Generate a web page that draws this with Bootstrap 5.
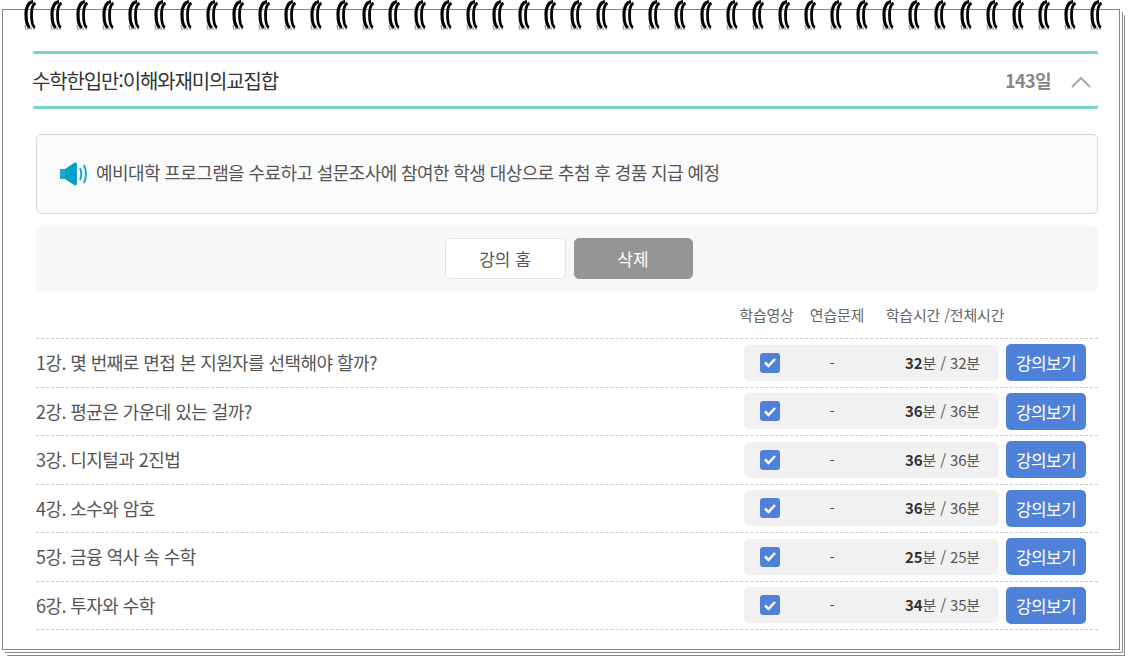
<!DOCTYPE html>
<html lang="ko">
<head>
<meta charset="utf-8">
<title>수학한입만</title>
<link href="https://cdn.jsdelivr.net/npm/bootstrap@5.3.3/dist/css/bootstrap.min.css" rel="stylesheet">
<style>
html, body { background: #fff; height: 658px; overflow: hidden; }
body { font-family: "Noto Sans CJK KR", "Noto Sans", sans-serif; color: #444; padding: 9px 0 0 2px; }
.paper {
    position: relative;
    width: 1118px; height: 641px;
    background: #fff;
    border: 1px solid #888;
    padding: 41px 21px 0 30px;
    box-shadow: 2px 2px 0 #fff, 3px 3px 0 #888, 4px 5px 0 #fff, 5px 6px 0 #888;
}
.rings { position: absolute; left: 19px; top: -10px; }
.title-bar { border-top: 3px solid #76d4c8; border-bottom: 3px solid #76d4c8; height: 58px; border-radius: 2px; padding-right: 7px; }
.course-title { font-size: 20px; letter-spacing: -1.15px; color: #333; margin-left: -1px; padding-top: 1px; }
.days { font-size: 18px; font-weight: 700; color: #888; letter-spacing: -.6px; margin-right: 20px; }
.chev { margin-top: 3px; }
.notice { margin: 25px 0 0 3px; height: 80px; background: #fbfbfb; border: 1px solid #d9d9d9; border-radius: 5px; padding-left: 23px; font-size: 18px; letter-spacing: -.6px; color: #555; }
.notice-text { padding-bottom: 3px; }
.action-area { margin: 12px 0 0 3px; height: 65px; background: #f7f7f7; border-radius: 5px; padding-left: 3px; }
.act-btn { height: 41px; font-size: 17px; border-radius: 5px; padding: 0; }
.act-home { width: 121px; background: #fff; border: 1px solid #e4e4e4; color: #555; }
.act-del { width: 119px; background: #959595; border: 1px solid #959595; color: #fff; }
.table-wrap { margin-left: 3px; }
.col-heads { height: 48px; font-size: 15px; letter-spacing: -.2px; color: #666; border-bottom: 1px dashed #ccc; padding-top: 2px; }
.lesson-row { height: 48.5px; border-bottom: 1px dashed #ccc; padding-right: 12px; }
.lesson-name { font-size: 18px; letter-spacing: -.57px; color: #555; }
.stat-pill { width: 255px; height: 36px; background: #f1f1f1; border-radius: 5px; font-size: 15px; color: #555; letter-spacing: -.15px; }
.cell-video { width: 52px; }
.cell-quiz { width: 72px; }
.cell-time { width: 131px; padding-right: 19px; text-align: right; }
.cell-time b { color: #333; }
.check-box { width: 20px; height: 20px; background: #4f81d9; border-radius: 3px; }
.view-btn { width: 80px; height: 37px; margin-left: 7px; background: #4f81d9; border: 0; border-radius: 5px; color: #fff; font-size: 17px; padding: 0; letter-spacing: -.6px; }
.head-a { width: 71px; }
.head-b { width: 70px; margin-right: 11px; }
.head-c { width: 124px; }
.head-gap { width: 91px; }
</style>
</head>
<body>
<div class="paper">
    <svg class="rings" width="1090" height="32" viewBox="0 0 1090 32">
        <defs>
            <g id="ring">
                <path d="M1 25L2 30M4 26L4 30M7 27L7 30M10 27L10 30" fill="none" stroke="#aaa" stroke-width="1.500"/>
                <path d="M6 27.500Q2 26 2 14Q2 3 9 1.500" fill="none" stroke="#000" stroke-width="3.200"/>
                <path d="M11 27.500Q7.500 26 7.500 15Q7.500 5 11.500 3" fill="none" stroke="#000" stroke-width="2.800"/>
            </g>
        </defs>
        <use href="#ring" x="2"/><use href="#ring" x="28"/><use href="#ring" x="54"/><use href="#ring" x="80"/><use href="#ring" x="106"/><use href="#ring" x="132"/><use href="#ring" x="158"/><use href="#ring" x="184"/><use href="#ring" x="210"/><use href="#ring" x="236"/><use href="#ring" x="262"/><use href="#ring" x="288"/><use href="#ring" x="314"/><use href="#ring" x="340"/><use href="#ring" x="366"/><use href="#ring" x="392"/><use href="#ring" x="418"/><use href="#ring" x="444"/><use href="#ring" x="470"/><use href="#ring" x="496"/><use href="#ring" x="522"/><use href="#ring" x="548"/><use href="#ring" x="574"/><use href="#ring" x="600"/><use href="#ring" x="626"/><use href="#ring" x="652"/><use href="#ring" x="678"/><use href="#ring" x="704"/><use href="#ring" x="730"/><use href="#ring" x="756"/><use href="#ring" x="782"/><use href="#ring" x="808"/><use href="#ring" x="834"/><use href="#ring" x="860"/><use href="#ring" x="886"/><use href="#ring" x="912"/><use href="#ring" x="938"/><use href="#ring" x="964"/><use href="#ring" x="990"/><use href="#ring" x="1016"/><use href="#ring" x="1042"/><use href="#ring" x="1068"/>
    </svg>

    <div class="title-bar d-flex align-items-center justify-content-between">
        <span class="course-title">수학한입만:이해와재미의교집합</span>
        <div class="d-flex align-items-center">
            <span class="days">143일</span>
            <svg class="chev" width="20" height="12" viewBox="0 0 20 12"><path d="M1 11L10 2L19 11" fill="none" stroke="#aaa" stroke-width="2"/></svg>
        </div>
    </div>

    <div class="notice d-flex align-items-center gap-2">
        <svg width="28" height="24" viewBox="0 0 28 24">
            <path d="M0 7H6V17H0Z" fill="#1fa8c9"/>
            <path d="M5 7L14 1Q17 -.5 17 3V21Q17 24.500 14 23L5 17Z" fill="#05a0c8"/>
            <path d="M20 6Q22.500 12 20 18M24 3Q28 12 24 21" fill="none" stroke="#1fa8c9" stroke-width="2"/>
        </svg>
        <span class="notice-text">예비대학 프로그램을 수료하고 설문조사에 참여한 학생 대상으로 추첨 후 경품 지급 예정</span>
    </div>

    <div class="action-area d-flex align-items-center justify-content-center gap-2">
        <button class="btn act-btn act-home">강의 홈</button>
        <button class="btn act-btn act-del">삭제</button>
    </div>

    <div class="table-wrap">
        <div class="col-heads d-flex align-items-center justify-content-end text-center">
            <div class="head-a">학습영상</div>
            <div class="head-b">연습문제</div>
            <div class="head-c">학습시간 /전체시간</div>
            <div class="head-gap"></div>
        </div>
        <div id="lessons"></div>
    </div>
</div>

<script src="https://cdn.jsdelivr.net/npm/bootstrap@5.3.3/dist/js/bootstrap.bundle.min.js"></script>
<script>
const lessons = [
    ["1강. 몇 번째로 면접 본 지원자를 선택해야 할까?", 32, 32],
    ["2강. 평균은 가운데 있는 걸까?", 36, 36],
    ["3강. 디지털과 2진법", 36, 36],
    ["4강. 소수와 암호", 36, 36],
    ["5강. 금융 역사 속 수학", 25, 25],
    ["6강. 투자와 수학", 34, 35]
]
document.getElementById("lessons").innerHTML = lessons.map(l => `
    <div class="lesson-row d-flex align-items-center">
        <span class="lesson-name flex-grow-1">${l[0]}</span>
        <div class="stat-pill d-flex align-items-center">
            <div class="cell-video d-flex justify-content-center">
                <span class="check-box d-flex align-items-center justify-content-center">
                    <svg width="14" height="11" viewBox="0 0 14 11"><path d="M2 5.500L5.500 9L12 2" fill="none" stroke="#fff" stroke-width="2.500"/></svg>
                </span>
            </div>
            <div class="cell-quiz text-center">-</div>
            <div class="cell-time"><b>${l[1]}</b>분 / ${l[2]}분</div>
        </div>
        <button class="view-btn">강의보기</button>
    </div>`).join("")
</script>
</body>
</html>
